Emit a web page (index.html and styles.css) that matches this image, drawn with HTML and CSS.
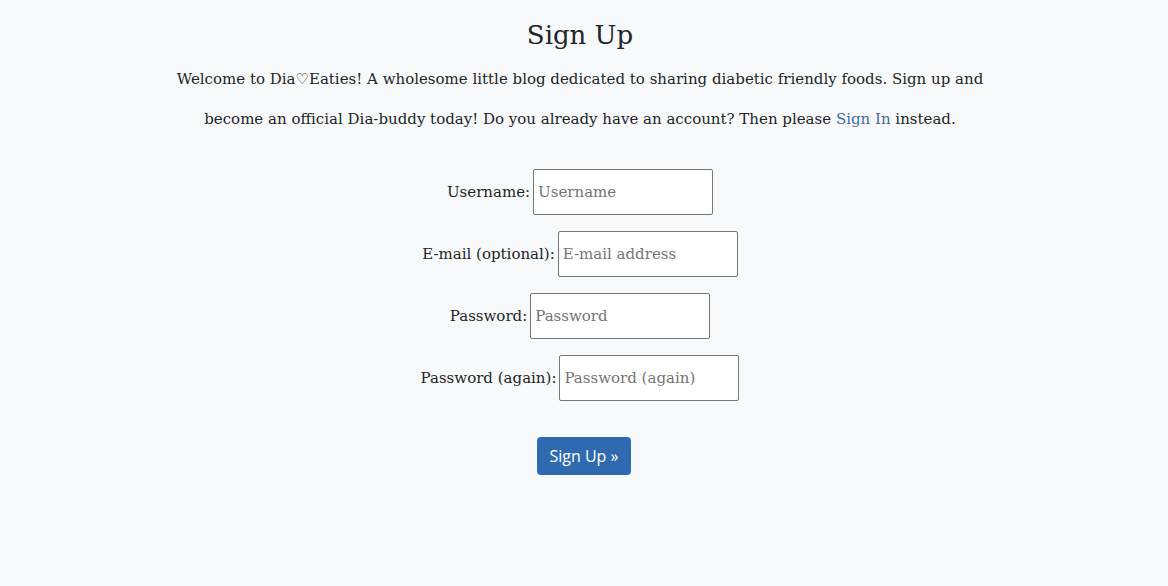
FILE: index.html
```html
<!DOCTYPE html>
<html lang="en">
<head>
<meta charset="utf-8">
<title>Sign Up</title>
<link rel="stylesheet" href="styles.css">
</head>
<body>
<main class="page">
  <h1 class="title">Sign Up</h1>
  <p class="intro">Welcome to Dia♡Eaties! A wholesome little blog dedicated to sharing diabetic friendly foods. Sign up and<br>become an official Dia-buddy today! Do you already have an account? Then please <a class="link" href="#">Sign In</a> instead.</p>
  <form class="form">
    <div class="row"><label class="label" for="u">Username:</label><input class="field" id="u" type="text" placeholder="Username"></div>
    <div class="row"><label class="label" for="e">E-mail (optional):</label><input class="field" id="e" type="email" placeholder="E-mail address"></div>
    <div class="row"><label class="label" for="p1">Password:</label><input class="field" id="p1" type="password" placeholder="Password"></div>
    <div class="row"><label class="label" for="p2">Password (again):</label><input class="field" id="p2" type="password" placeholder="Password (again)"></div>
    <div class="actions"><button class="btn" type="submit">Sign Up »</button></div>
  </form>
</main>
</body>
</html>
```
FILE: styles.css
```css
html, body {
  margin: 0;
  padding: 0;
  background: #f8f9fa;
}
body {
  font-family: "DejaVu Serif", "Liberation Serif", serif;
  color: #212529;
}
.page {
  display: flex;
  flex-direction: column;
  align-items: center;
  padding: 15px 8px 0 0;
}
.title {
  margin: 0;
  font-size: 26px;
  font-weight: normal;
  line-height: 40px;
}
.intro {
  margin: 4px 0 0;
  text-align: center;
  white-space: nowrap;
  font-size: 15px;
  line-height: 40px;
}
.link {
  color: #3e6b9f;
  text-decoration: none;
}
.form {
  margin-top: 30px;
  display: flex;
  flex-direction: column;
  align-items: center;
  gap: 16px;
}
.row {
  display: flex;
  align-items: center;
  gap: 3px;
}
.label {
  font-size: 15px;
}
.field {
  box-sizing: border-box;
  width: 180px;
  height: 46px;
  padding: 0 4px;
  border: 1px solid #767676;
  border-radius: 2px;
  background: #fff;
  font-family: "DejaVu Serif", "Liberation Serif", serif;
  font-size: 15px;
  color: #212529;
}
.field::placeholder {
  color: #757575;
}
.actions {
  margin-top: 20px;
  padding-left: 8px;
}
.btn {
  height: 38px;
  padding: 0 12px;
  border: 0;
  border-radius: 4px;
  background: #2f6ab0;
  color: #fff;
  font-family: "Open Sans", "Noto Sans", sans-serif;
  font-size: 16px;
  cursor: pointer;
}
```
